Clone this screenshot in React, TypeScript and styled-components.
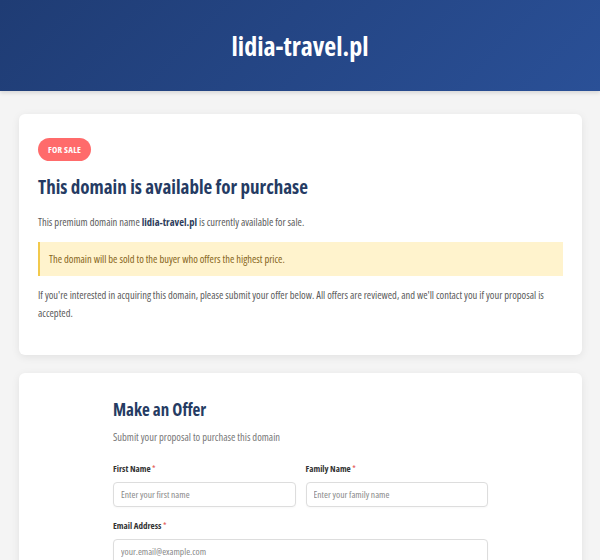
import React from "react";
import styled, { createGlobalStyle } from "styled-components";

const Global = createGlobalStyle`
  html, body { margin: 0; padding: 0; }
  body {
    background: #f4f4f4;
    font-family: "Open Sans", "Liberation Sans", Arial, sans-serif;
    font-stretch: condensed;
    color: #555;
  }
  * { box-sizing: border-box; }
  input { font-stretch: condensed; }
`;

const Header = styled.header`
  height: 91px;
  display: flex;
  align-items: center;
  justify-content: center;
  background: linear-gradient(135deg, #1f3c74 0%, #2a5097 100%);
  box-shadow: 0 2px 4px rgba(0,0,0,0.12);
`;

const SiteTitle = styled.h1`
  margin: 0;
  color: #fff;
  font-size: 26px;
  line-height: 32px;
  font-weight: 700;
`;

const Main = styled.main`
  padding: 23px 18px 0 19px;
  display: flex;
  flex-direction: column;
  gap: 18px;
`;

const Card = styled.section<{ $pb?: number }>`
  background: #fff;
  border-radius: 6px;
  box-shadow: 0 2px 8px rgba(0,0,0,0.08);
  padding: 24px 19px ${(p) => p.$pb ?? 24}px 19px;
`;

const Badge = styled.span`
  display: block;
  width: fit-content;
  background: #ff6b6b;
  color: #fff;
  font-size: 9px;
  font-weight: 700;
  text-transform: uppercase;
  padding: 6px 10px;
  border-radius: 12px;
  line-height: 11px;
  letter-spacing: 0.2px;
`;

const Heading = styled.h2`
  margin: 14px 0 14px;
  color: #253b63;
  font-size: 19px;
  line-height: 24px;
  font-weight: 700;
`;

const Text = styled.p`
  margin: 0;
  font-size: 10.5px;
  line-height: 18px;
  color: #5a5a5a;
  & strong { color: #2d3d5c; }
`;

const Notice = styled.div`
  margin: 11px 0 10px;
  background: #fff3cd;
  border-left: 2px solid #f2c94c;
  color: #86651a;
  font-size: 10.5px;
  padding: 8px 9px;
  line-height: 18px;
`;

const FormWrap = styled.div`
  max-width: 375px;
  margin: 0 auto;
`;

const FormTitle = styled.h2`
  margin: 2px 0 9px;
  color: #253b63;
  font-size: 17px;
  line-height: 22px;
  font-weight: 700;
`;

const Sub = styled.p`
  margin: 0 0 19px;
  font-size: 10.5px;
  line-height: 14px;
  color: #777;
`;

const Row = styled.div`
  display: grid;
  grid-template-columns: 1fr 1fr;
  gap: 10px;
`;

const Field = styled.div`
  display: flex;
  flex-direction: column;
  margin-bottom: 13px;
`;

const Label = styled.label`
  font-size: 9px;
  font-weight: 700;
  color: #333;
  margin-bottom: 7px;
  line-height: 12px;
  & span { color: #e25555; font-weight: 400; }
`;

const Input = styled.input`
  height: 25px;
  border: 1px solid #dddddd;
  border-radius: 4px;
  padding: 0 7px;
  font-family: "Open Sans", "Liberation Sans", sans-serif;
  font-size: 9.5px;
  color: #333;
  background: #fff;
  box-shadow: 0 1px 2px rgba(0,0,0,0.03);
  &::placeholder { color: #888; }
`;

export default function App() {
  return (
    <>
      <Global />
      <Header>
        <SiteTitle>lidia-travel.pl</SiteTitle>
      </Header>
      <Main>
        <Card $pb={33}>
          <Badge>For Sale</Badge>
          <Heading>This domain is available for purchase</Heading>
          <Text>
            This premium domain name <strong>lidia-travel.pl</strong> is currently available for sale.
          </Text>
          <Notice>The domain will be sold to the buyer who offers the highest price.</Notice>
          <Text>
            If you're interested in acquiring this domain, please submit your offer below. All offers are reviewed, and we'll contact you if your proposal is accepted.
          </Text>
        </Card>
        <Card>
          <FormWrap>
            <FormTitle>Make an Offer</FormTitle>
            <Sub>Submit your proposal to purchase this domain</Sub>
            <Row>
              <Field>
                <Label>First Name <span>*</span></Label>
                <Input placeholder="Enter your first name" />
              </Field>
              <Field>
                <Label>Family Name <span>*</span></Label>
                <Input placeholder="Enter your family name" />
              </Field>
            </Row>
            <Field>
              <Label>Email Address <span>*</span></Label>
              <Input placeholder="your.email@example.com" />
            </Field>
          </FormWrap>
        </Card>
      </Main>
    </>
  );
}
